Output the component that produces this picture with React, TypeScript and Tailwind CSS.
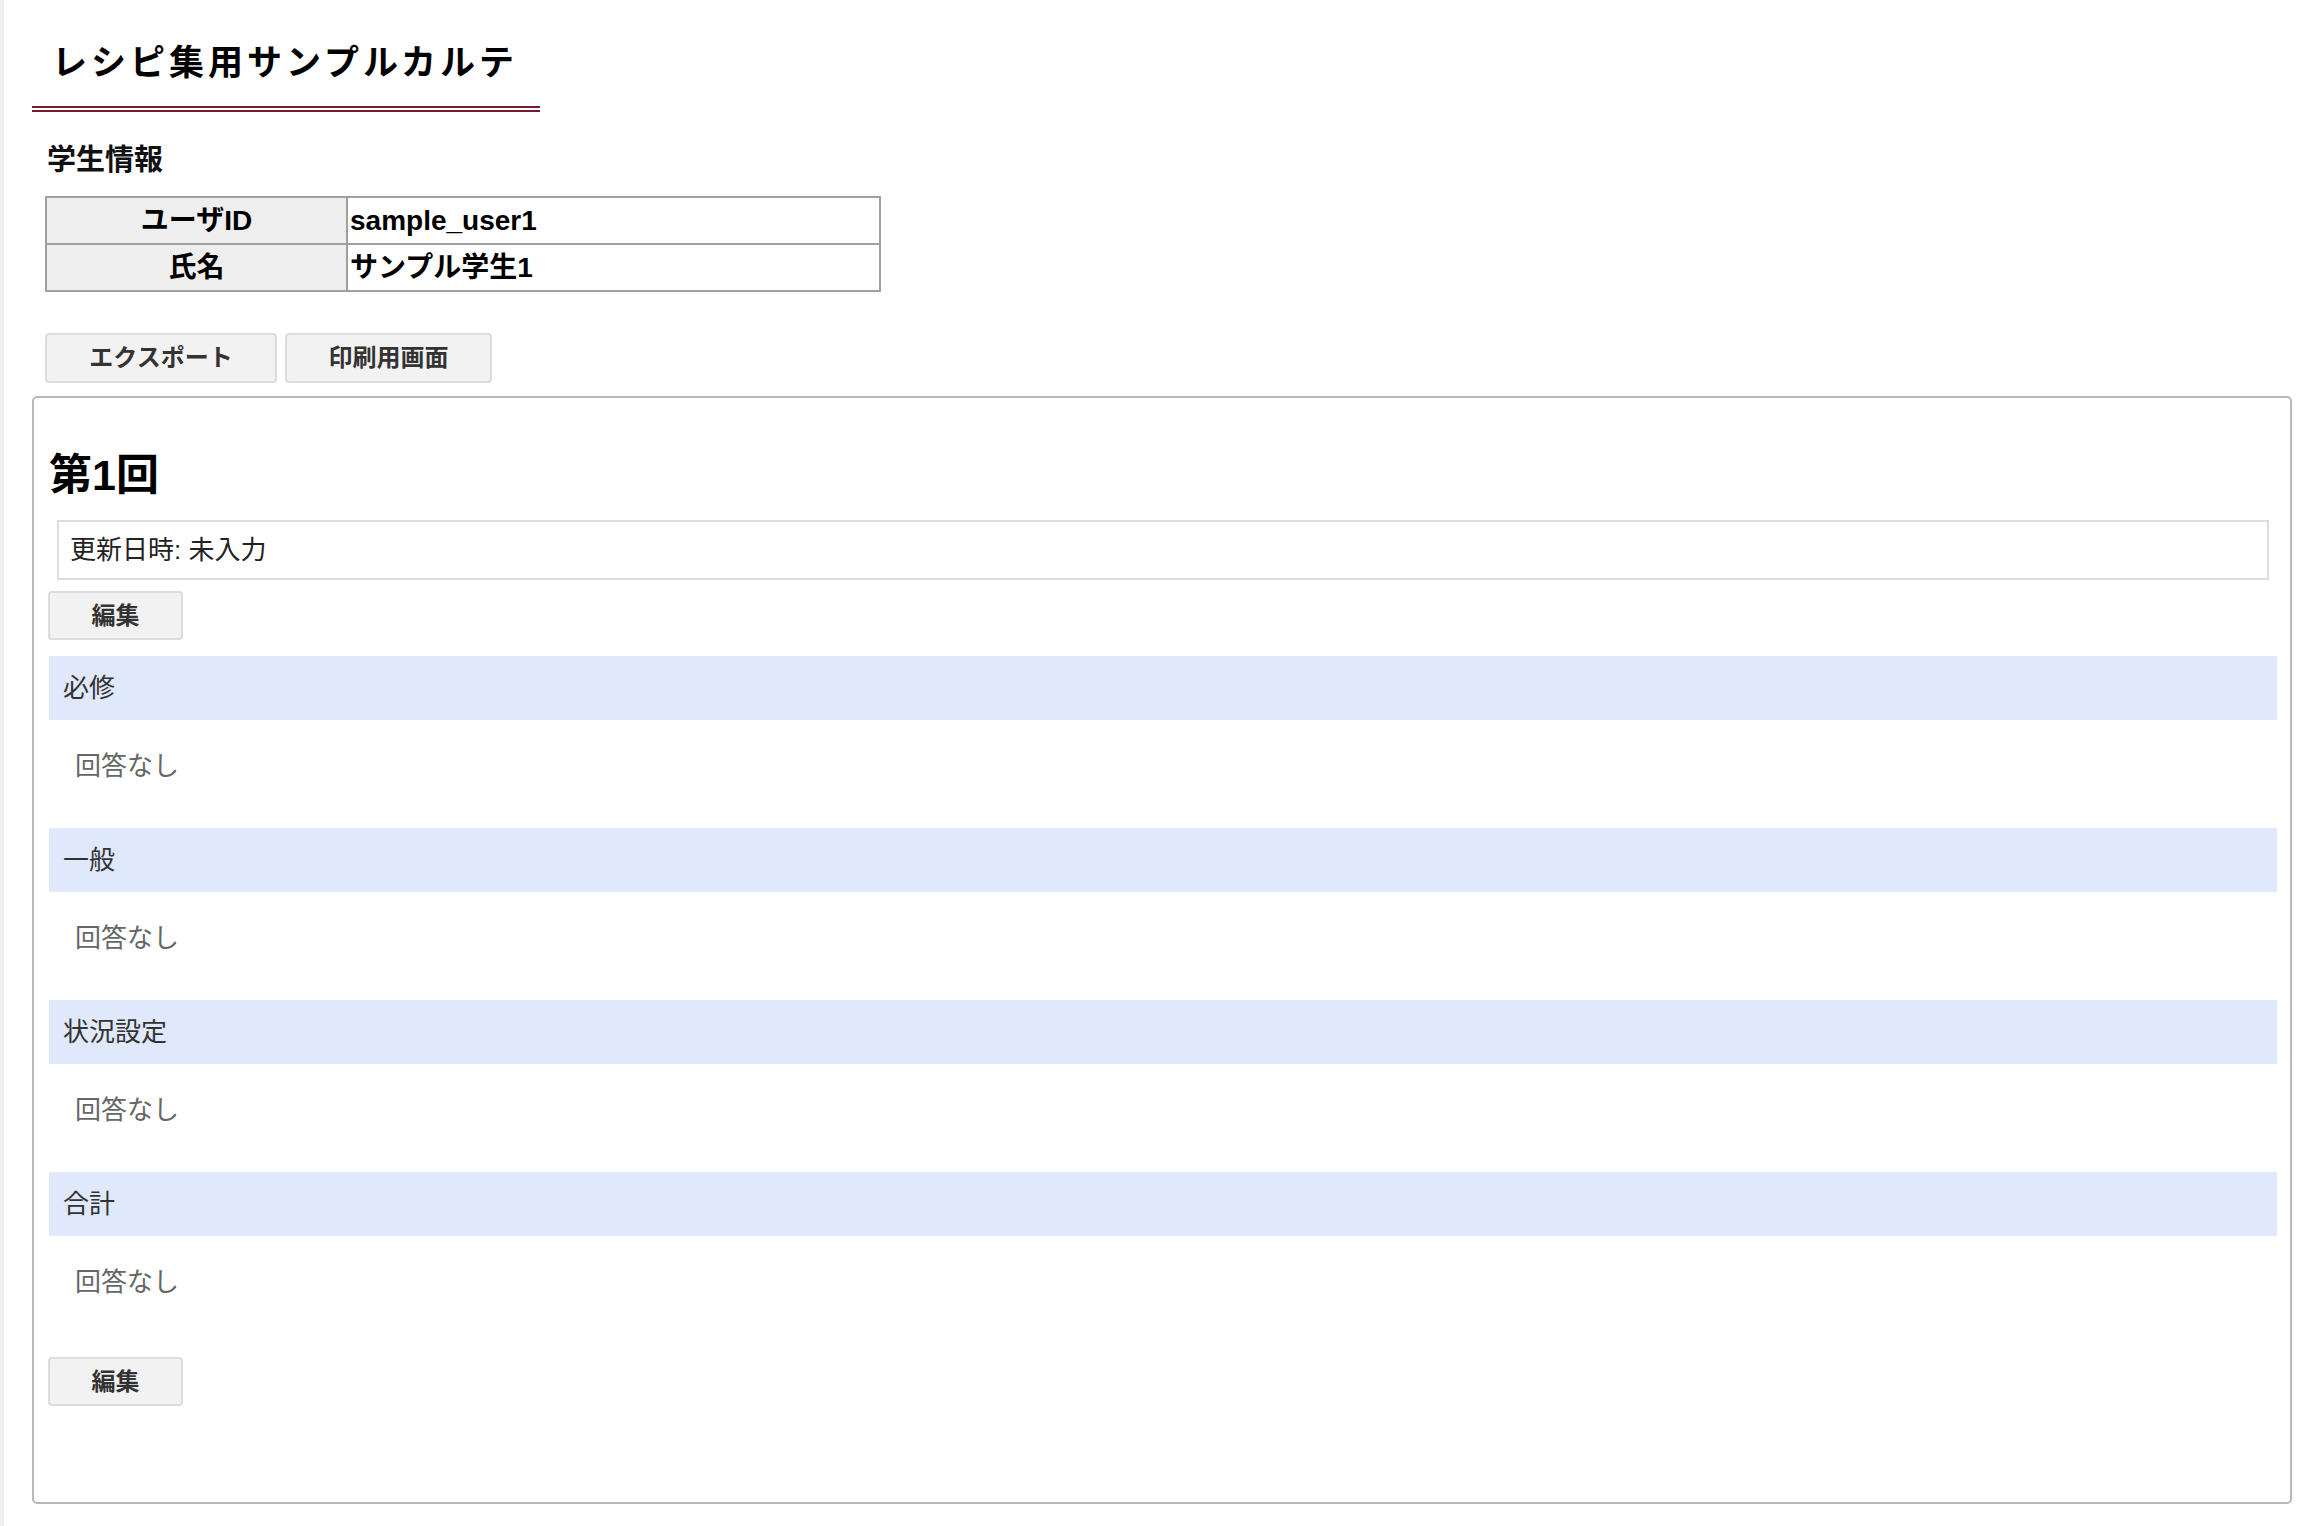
const font = { fontFamily: '"Liberation Sans", "Noto Sans CJK JP", sans-serif' };

const sections = ["必修", "一般", "状況設定", "合計"];

function GrayButton({ label, className }: { label: string; className: string }) {
  return (
    <button
      className={`flex items-center justify-center rounded-[4px] border-2 border-[#dcdcdc] bg-[#f2f2f2] text-[24px] font-bold text-[#333] ${className}`}
    >
      {label}
    </button>
  );
}

export default function App() {
  return (
    <div className="min-h-[1526px] border-l-4 border-[#efefef] bg-white pl-[28px] pr-[22px]" style={font}>
      <div className="w-[508px] border-b-[6px] border-double border-[#731b30] pb-[18px] pl-[20px] pt-[37px]">
        <h1 className="text-[35px] font-bold leading-[51px] tracking-[4px] text-black">レシピ集用サンプルカルテ</h1>
      </div>

      <h2 className="ml-[15px] mt-[27px] text-[29px] font-bold leading-[42px] text-[#111]">学生情報</h2>

      <table className="ml-[13px] mt-[15px] w-[836px] border-collapse border-2 border-[#a0a0a0] text-[28px] font-bold text-black">
        <tbody>
          <tr className="h-[47px]">
            <th className="w-[301px] border-2 border-[#a0a0a0] bg-[#eeeeee] p-0 text-center font-bold">ユーザID</th>
            <td className="border-2 border-[#a0a0a0] px-[2px] py-0">sample_user1</td>
          </tr>
          <tr className="h-[47px]">
            <th className="border-2 border-[#a0a0a0] bg-[#eeeeee] p-0 text-center font-bold">氏名</th>
            <td className="border-2 border-[#a0a0a0] px-[2px] py-0">サンプル学生1</td>
          </tr>
        </tbody>
      </table>

      <div className="ml-[13px] mt-[41px] flex gap-[8px]">
        <GrayButton label="エクスポート" className="h-[50px] w-[232px]" />
        <GrayButton label="印刷用画面" className="h-[50px] w-[207px]" />
      </div>

      <div className="mt-[13px] rounded-[5px] border-2 border-[#b8b8b8] pb-[96px] pl-[15px] pr-[13px]">
        <h2 className="mt-[47px] text-[43px] font-bold leading-[60px] text-black">第1回</h2>

        <div className="mx-[8px] mt-[15px] flex h-[60px] items-center border-2 border-[#dddddd] px-[11px] text-[26px] text-[#222]">
          更新日時: 未入力
        </div>

        <GrayButton label="編集" className="-ml-[1px] mt-[11px] h-[49px] w-[135px]" />

        <div className="mt-[16px]">
          {sections.map((s) => (
            <div key={s}>
              <div className="flex h-[64px] items-center bg-[#e0e8fc] pl-[14px] text-[26px] text-[#333]">{s}</div>
              <div className="h-[108px] pl-[26px] pt-[27px] text-[26px] leading-[39px] text-[#666]">回答なし</div>
            </div>
          ))}
        </div>

        <GrayButton label="編集" className="-ml-[1px] mt-[13px] h-[49px] w-[135px]" />
      </div>
    </div>
  );
}
